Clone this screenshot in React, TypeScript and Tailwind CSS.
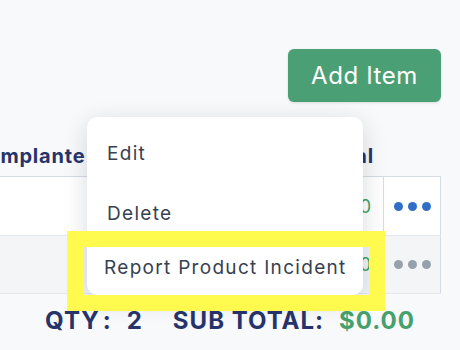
import React from 'react';

type Row = { total: string; active: boolean; striped: boolean };

const rows: Row[] = [
  { total: '$0.00', active: true, striped: false },
  { total: '$0.00', active: false, striped: true },
];

function Dots({ active }: { active: boolean }) {
  const color = active ? 'bg-[#316fc7]' : 'bg-[#97a1ab]';
  return (
    <div className="flex items-center justify-center gap-[5px]">
      <span className={`w-[9px] h-[9px] rounded-full ${color}`} />
      <span className={`w-[9px] h-[9px] rounded-full ${color}`} />
      <span className={`w-[9px] h-[9px] rounded-full ${color}`} />
    </div>
  );
}

function ActionMenu() {
  return (
    <div className="absolute left-[87px] top-[117px] w-[276px] h-[178px] bg-white rounded-[10px] shadow-[0_6px_24px_rgba(15,23,42,0.16)] pt-[7px] text-[19px] tracking-[1.3px] text-[#374151]">
      <div className="h-[60px] flex items-center px-[20px]">Edit</div>
      <div className="h-[60px] flex items-center px-[20px]">Delete</div>
      <div className="h-[48px] flex items-center px-[17px] whitespace-nowrap">Report Product Incident</div>
    </div>
  );
}

export default function App() {
  return (
    <div className="relative w-[460px] h-[350px] overflow-hidden bg-[#f8f9fa] font-['Inter',sans-serif]">
      <div className="flex flex-col items-end pt-[49px] pr-[19px]">
        <button
          type="button"
          className="w-[153px] h-[53px] rounded-[6px] bg-[#4b9f75] text-white text-[24px] tracking-[0.6px] shadow-sm"
        >
          Add Item
        </button>

        <div className="mt-[34px] w-[500px] shrink-0">
          <div className="flex h-[40px] items-center text-[20px] font-bold tracking-[0.8px] text-[#27346b]">
            <div className="w-[40px]" />
            <div className="w-[180px] pl-[13px] whitespace-nowrap">Implante</div>
            <div className="w-[100px]" />
            <div className="w-[122px] pr-[9px] text-right">Total</div>
            <div className="w-[58px]" />
          </div>
          <div className="border-t border-[#d5dce4]">
            {rows.map((row, i) => (
              <div
                key={i}
                className={`flex items-center border-b border-[#e3e8ee] ${row.striped ? 'bg-[#f3f5f7] h-[58px]' : 'bg-white h-[59px]'}`}
              >
                <div className="w-[40px]" />
                <div className="w-[180px]" />
                <div className="w-[100px]" />
                <div className="w-[122px] pr-[12px] text-right text-[18px] text-[#3fa35f]">{row.total}</div>
                <div className="w-[58px] h-full flex items-center justify-center border-x border-[#d5dce4]">
                  <Dots active={row.active} />
                </div>
              </div>
            ))}
          </div>
        </div>
      </div>

      <div className="h-[54px] flex items-center justify-center text-[24px] font-bold tracking-[1px] text-[#27346b] leading-none">
        <span>QTY<span className="ml-[3px]">:</span></span>
        <span className="ml-[15px]">2</span>
        <span className="ml-[30px]">SUB TOTAL:</span>
        <span className="ml-[15px] text-[#45a06c]">$0.00</span>
      </div>

      <ActionMenu />

      <div className="absolute left-[67px] top-[231px] w-[318px] h-[80px] border-[16px] border-[#fffa4d] pointer-events-none" />
    </div>
  );
}
